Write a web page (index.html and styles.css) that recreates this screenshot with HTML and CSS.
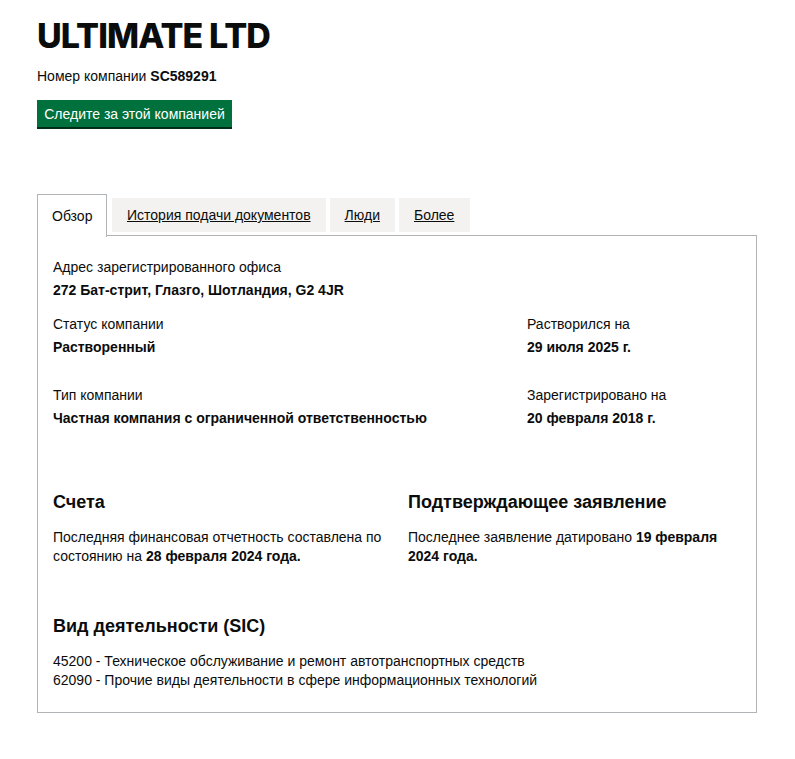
FILE: index.html
```html
<!DOCTYPE html>
<html lang="ru">
<head>
<meta charset="utf-8">
<link rel="stylesheet" href="styles.css">
</head>
<body>
<main class="page">
  <h1 class="title">ULTIMATE LTD</h1>
  <p class="company-number">Номер компании <strong>SC589291</strong></p>
  <button class="follow-btn">Следите за этой компанией</button>

  <div class="tabs">
    <ul class="tab-list">
      <li class="tab tab-active">Обзор</li>
      <li class="tab"><a href="#">История подачи документов</a></li>
      <li class="tab"><a href="#">Люди</a></li>
      <li class="tab"><a href="#">Более</a></li>
    </ul>
    <section class="panel">
      <dl class="field">
        <dt>Адрес зарегистрированного офиса</dt>
        <dd>272 Бат-стрит, Глазго, Шотландия, G2 4JR</dd>
      </dl>
      <div class="row-two">
        <dl class="field">
          <dt>Статус компании</dt>
          <dd>Растворенный</dd>
        </dl>
        <dl class="field">
          <dt>Растворился на</dt>
          <dd>29 июля 2025 г.</dd>
        </dl>
      </div>
      <div class="row-two">
        <dl class="field">
          <dt>Тип компании</dt>
          <dd>Частная компания с ограниченной ответственностью</dd>
        </dl>
        <dl class="field">
          <dt>Зарегистрировано на</dt>
          <dd>20 февраля 2018 г.</dd>
        </dl>
      </div>
      <div class="row-half">
        <div>
          <h2 class="section-heading">Счета</h2>
          <p class="text">Последняя финансовая отчетность составлена по состоянию на <strong>28 февраля 2024 года.</strong></p>
        </div>
        <div>
          <h2 class="section-heading">Подтверждающее заявление</h2>
          <p class="text">Последнее заявление датировано <strong>19 февраля 2024 года.</strong></p>
        </div>
      </div>
      <h2 class="section-heading sic-heading">Вид деятельности (SIC)</h2>
      <ul class="sic-list">
        <li>45200 - Техническое обслуживание и ремонт автотранспортных средств</li>
        <li>62090 - Прочие виды деятельности в сфере информационных технологий</li>
      </ul>
    </section>
  </div>
</main>
</body>
</html>
```

FILE: styles.css
```css
* { box-sizing: border-box; }
html, body { margin: 0; padding: 0; background: #fff; }
body {
  font-family: "Liberation Sans", Arial, sans-serif;
  color: #0b0c0c;
  font-size: 14px;
}
.page {
  padding: 16px 37px 40px 37px;
  width: 795px;
}
.title {
  font-family: Inter, "Liberation Sans", sans-serif;
  font-weight: 800;
  font-size: 34px;
  line-height: 40px;
  margin: 0 0 10px 0;
  letter-spacing: -0.9px;
}
.company-number {
  margin: 0 0 14px 0;
  font-size: 14px;
  line-height: 20px;
}
.follow-btn {
  display: block;
  font-family: "Liberation Sans", Arial, sans-serif;
  font-size: 14px;
  line-height: 18px;
  color: #fff;
  background: #00703c;
  border: 0;
  box-shadow: 0 2px 0 #002d18;
  padding: 4px 7px 4px 7px;
  margin: 0 0 67px 0;
  width: 195px;
  height: 27px;
  text-align: center;
}
.tab-list {
  list-style: none;
  margin: 0;
  padding: 0;
  display: flex;
  gap: 4px;
  align-items: flex-start;
  position: relative;
  z-index: 1;
}
.tab {
  background: #f3f2f1;
  height: 34px;
  margin-top: 4px;
  padding: 0 15px;
  display: flex;
  align-items: center;
  font-size: 14px;
}
.tab:first-child + .tab { margin-left: 1px; }
.tab:last-child { padding-right: 16px; }
.tab a { color: #0b0c0c; text-decoration: underline; }
.tab-active {
  background: #fff;
  border: 1px solid #b1b4b6;
  border-bottom: 0;
  height: 43px;
  margin-top: 0;
  padding: 0 14px 0 14px;
  margin-bottom: -1px;
  width: 70px;
}
.panel {
  border: 1px solid #b1b4b6;
  margin-top: -1px;
  width: 720px;
  padding: 21px 15px 22px 15px;
}
.field { margin: 0 0 14px 0; }
.field dt { line-height: 20px; margin-bottom: 3px; }
.field dd { margin: 0; font-weight: bold; line-height: 20px; }
.row-two {
  display: grid;
  grid-template-columns: 474px 1fr;
}
.row-two + .row-two { margin-top: 14px; }
.row-half {
  display: grid;
  grid-template-columns: 355px 1fr;
  margin-top: 48px;
}
.section-heading {
  font-size: 18px;
  line-height: 24px;
  font-weight: bold;
  margin: 0 0 14px 0;
}
.text { margin: 0; line-height: 19px; padding-right: 18px; }
.sic-heading { margin-top: 48px; margin-bottom: 14px; }
.sic-list { list-style: none; margin: 0; padding: 0; line-height: 19px; }
```
